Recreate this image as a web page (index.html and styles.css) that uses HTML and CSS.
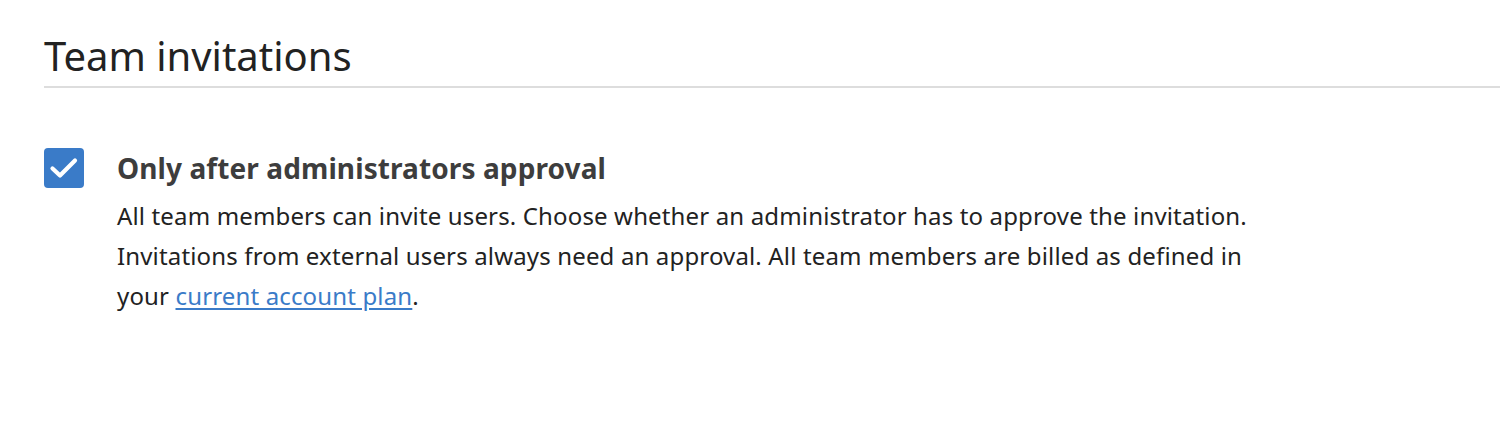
FILE: index.html
```html
<!DOCTYPE html>
<html lang="en">
<head>
    <meta charset="UTF-8">
    <title>Team invitations</title>
    <link rel="stylesheet" href="styles.css">
</head>
<body>

<section class="settings">
    <h2 class="section-title">Team invitations</h2>

    <!-- Invitation approval option -->
    <label class="option">
        <input type="checkbox" class="option-input" checked>
        <span class="checkbox">
            <svg width="40" height="40" viewBox="0 0 40 40"><path d="M8.5 20.5l7.5 7L31 12.5" fill="none" stroke="#fff" stroke-width="4.2" stroke-linecap="round" stroke-linejoin="round"/></svg>
        </span>
        <span class="option-body">
            <span class="option-title">Only after administrators approval</span>
            <span class="option-text">All team members can invite users. Choose whether an administrator has to approve the invitation.<br>Invitations from external users always need an approval. All team members are billed as defined in<br>your <a href="#">current account plan</a>.</span>
        </span>
    </label>
</section>

</body>
</html>
```

FILE: styles.css
```css
body { margin: 0; font-family: "Noto Sans", "Open Sans", sans-serif; color: #222; background: #fff; }
.settings { padding: 25px 0 0 44px; }
.section-title { margin: 0; font-size: 40px; font-weight: 400; line-height: 61px; color: #222; border-bottom: 2px solid #ddd; }
.option { display: flex; gap: 33px; margin-top: 60px; cursor: pointer; }
.option-input { display: none; }
.checkbox { flex: none; width: 40px; height: 40px; border-radius: 4px; background: #3a7bc8; }
.checkbox svg { display: block; }
.option-body { display: flex; flex-direction: column; }
.option-title { font-size: 28px; font-weight: 700; letter-spacing: 0.1px; color: #3d3d3d; line-height: 40px; }
.option-text { margin-top: 8px; font-size: 24px; letter-spacing: 0.15px; line-height: 40px; color: #222; white-space: nowrap; }
.option-text a { color: #3a7bc8; text-decoration: underline; text-underline-offset: 3px; }
```
